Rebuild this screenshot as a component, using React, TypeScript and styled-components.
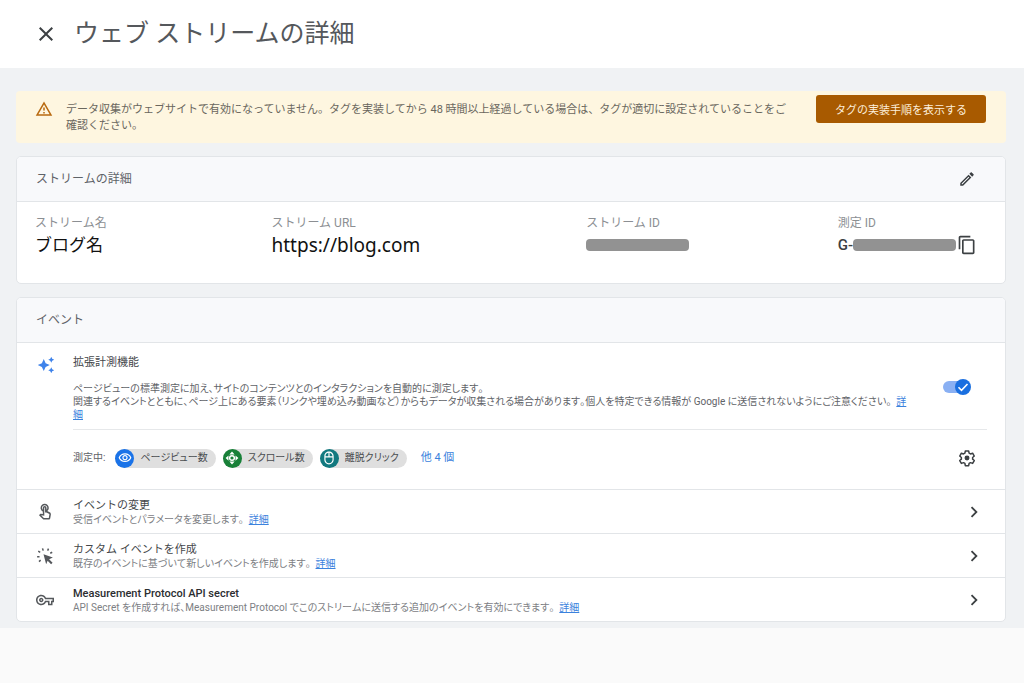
import React from "react";
import styled, { createGlobalStyle } from "styled-components";
import {
  MdAutoAwesome,
  MdChevronRight,
  MdClose,
  MdContentCopy,
  MdOutlineEdit,
  MdOutlineMouse,
  MdOutlineTouchApp,
  MdOutlineVisibility,
  MdOutlineVpnKey,
  MdOutlineWarningAmber,
} from "react-icons/md";

const GlobalStyle = createGlobalStyle`
  *, *::before, *::after { box-sizing: border-box; }
  body {
    margin: 0;
    background: #fafafa;
    color: #5f6368;
    font-family: Roboto, "Noto Sans CJK JP", sans-serif;
    font-size: 11px;
    line-height: 16px;
  }
  h1, h2, h3, p, dl, dd, ul { margin: 0; padding: 0; font-weight: 400; }
  ul { list-style: none; }
  button { font-family: inherit; border: 0; padding: 0; background: none; cursor: pointer; }
`;

const TopBar = styled.header`
  display: flex;
  align-items: center;
  gap: 16px;
  height: 68px;
  padding: 0 34px;
  background: #fff;
`;

const PageTitle = styled.h1`
  font-size: 25px;
  line-height: 36px;
  color: #55585c;
`;

const IconButton = styled.button<{ $size: number }>`
  display: flex;
  flex: none;
  color: #3c4043;
  svg {
    width: ${(p) => p.$size}px;
    height: ${(p) => p.$size}px;
  }
`;

const Main = styled.main`
  display: flex;
  flex-direction: column;
  gap: 13px;
  padding: 23px 18px 6px 16px;
  background: #f0f2f4;
`;

const Alert = styled.section`
  display: flex;
  align-items: flex-start;
  min-height: 52px;
  padding: 4px 20px 9px 19px;
  border-radius: 4px;
  background: #fef6e0;
`;

const AlertIcon = styled(MdOutlineWarningAmber)`
  flex: none;
  width: 18px;
  height: 18px;
  margin: 5px 13px 0 0;
  color: #b8690f;
`;

const AlertText = styled.p`
  flex: 1;
  padding-top: 7px;
  color: #6a675e;
`;

const AlertButton = styled.button`
  flex: none;
  height: 28px;
  margin-left: 20px;
  padding: 0 19px;
  border-radius: 3px;
  background: #a85a00;
  color: #fdeeda;
  font-size: 11px;
`;

const Card = styled.section`
  border: 1px solid #e2e5e8;
  border-radius: 5px;
  background: #fff;
  overflow: hidden;
`;

const CardHeader = styled.header`
  display: flex;
  align-items: center;
  justify-content: space-between;
  height: 45px;
  padding: 0 29px 0 19px;
  border-bottom: 1px solid #e2e5e8;
  background: #f8f9fb;
`;

const CardTitle = styled.h2`
  font-size: 12px;
  line-height: 20px;
`;

const DetailList = styled.dl`
  display: grid;
  grid-template-columns: 236fr 314fr 251fr 149fr;
  min-height: 81px;
  padding: 12px 18px 24px;
`;

const DetailLabel = styled.dt`
  font-size: 12px;
  line-height: 18px;
  color: #8c8f93;
`;

const DetailValue = styled.dd`
  display: flex;
  align-items: center;
  height: 26px;
  color: #111;
  font-size: 17px;
`;

const StreamUrl = styled.span`
  font-family: "Noto Sans", sans-serif;
  font-size: 19px;
`;

const MeasurementId = styled.span`
  color: #3c4043;
  font-size: 15px;
  font-weight: 500;
`;

const Redacted = styled.span`
  flex: none;
  width: 103px;
  height: 12px;
  margin-right: 1px;
  border-radius: 4px;
  background: #929292;
`;

const Enhanced = styled.div`
  padding: 13px 18px 0 56px;
`;

const EnhancedTop = styled.div`
  display: flex;
  align-items: center;
  padding-bottom: 8px;
  border-bottom: 1px solid #e6e8ea;
`;

const Sparkles = styled(MdAutoAwesome)`
  flex: none;
  align-self: flex-start;
  width: 18px;
  height: 18px;
  margin: 0 18px 0 -36px;
  color: #3f83ea;
`;

const EnhancedText = styled.div`
  flex: 1;
`;

const ItemTitle = styled.h3<{ $strong?: boolean }>`
  font-size: 11px;
  font-weight: ${(p) => (p.$strong ? 500 : 400)};
  line-height: 14px;
  color: ${(p) => (p.$strong ? "#2b2d30" : "#44474a")};
`;

const Description = styled.p`
  padding-top: 12px;
  font-size: 10px;
  font-feature-settings: "palt";
  font-kerning: none;
  line-height: 13px;
`;

const Link = styled.a`
  margin-left: 5px;
  color: #3b82dd;
  text-decoration: underline;
`;

const Switch = styled.label`
  position: relative;
  display: flex;
  flex: none;
  align-items: center;
  width: 28px;
  height: 16px;
  margin: 0 16px 4px 32px;
  input {
    appearance: none;
    width: 25px;
    height: 12px;
    margin: 0;
    border-radius: 6px;
    background: #8ab0f3;
  }
  svg {
    position: absolute;
    right: 0;
    top: 0;
    width: 16px;
    height: 16px;
  }
`;

const ChipRow = styled.div`
  display: flex;
  align-items: center;
  gap: 10px;
  height: 59px;
  padding: 0 11px 3px 0;
  font-size: 10px;
`;

const ChipList = styled.ul`
  display: flex;
  gap: 7px;
`;

const Chip = styled.li`
  display: flex;
  align-items: center;
  gap: 6px;
  height: 19px;
  padding-right: 8px;
  border-radius: 10px;
  background: #dfdfdf;
  color: #4a4d50;
  font-feature-settings: "palt";
  font-kerning: none;
`;

const ChipIcon = styled.span<{ $color: string }>`
  display: grid;
  place-items: center;
  width: 19px;
  height: 19px;
  border-radius: 50%;
  background: ${(p) => p.$color};
  color: #fff;
  svg {
    width: 14px;
    height: 14px;
  }
`;

const MoreLink = styled.a`
  flex: 1;
  padding-left: 4px;
  color: #3b82dd;
  font-size: 11px;
  text-decoration: none;
`;

const ActionRow = styled.article`
  display: flex;
  align-items: center;
  height: 44px;
  padding: 0 20px 0 19px;
  border-top: 1px solid #e2e5e8;
  > svg {
    flex: none;
    width: 18px;
    height: 18px;
    margin-right: 19px;
    color: #55585c;
  }
`;

const ActionText = styled.div`
  flex: 1;
  padding-top: 1px;
  p {
    padding: 0;
    color: #7d8084;
  }
`;

const GearIcon = () => (
  <svg viewBox="0 0 24 24" fill="none" stroke="currentColor" strokeWidth="2" strokeLinejoin="round" aria-hidden="true">
    <path d="M9.8 2.600h4.400l.6 2.900 1.900 1.100 2.800-1 2.200 3.800-2.200 1.900v2.200l2.200 1.900-2.200 3.800-2.800-1-1.900 1.100-.6 2.900H9.800l-.6-2.900-1.900-1.100-2.800 1-2.200-3.800 2.200-1.900v-2.200L2.300 9.400l2.200-3.800 2.800 1 1.900-1.100z" />
    <circle cx="12" cy="12" r="3.300" fill="currentColor" stroke="none" />
  </svg>
);

const ScrollIcon = () => (
  <svg viewBox="0 0 24 24" fill="currentColor" aria-hidden="true">
    <path d="M12 1l4.500 5h-9zM12 23l-4.500-5h9zM1 12l5-4.500v9zM23 12l-5 4.500v-9z" />
    <circle cx="12" cy="12" r="4" fill="none" stroke="currentColor" strokeWidth="2.500" />
  </svg>
);

const ClickIcon = () => (
  <svg viewBox="0 0 24 24" aria-hidden="true">
    <path d="M10 9.500l12.500 4.600-5 2.200 4.600 4.600-2 2-4.600-4.600-2 4.700z" fill="currentColor" />
    <path d="M1.500 13h3.200M3 5.500l2.600 1.700M8.700 1.800l.9 3M15.500 4.800l1.200-2.700M4 19.500l2.200-2M19 8.300l2.600-1.300" fill="none" stroke="currentColor" strokeWidth="2" />
  </svg>
);

const SwitchKnob = () => (
  <svg viewBox="0 0 16 16" aria-hidden="true">
    <circle cx="8" cy="8" r="8" fill="#1a6fe0" />
    <path d="M3.500 8.300l3 3L12.500 5" fill="none" stroke="#fff" strokeWidth="1.600" />
  </svg>
);

const chips = [
  { label: "ページビュー数", color: "#1a73e8", icon: <MdOutlineVisibility /> },
  { label: "スクロール数", color: "#188038", icon: <ScrollIcon /> },
  { label: "離脱クリック", color: "#12797f", icon: <MdOutlineMouse /> },
];

const actions = [
  {
    title: "イベントの変更",
    text: "受信イベントとパラメータを変更します。",
    icon: <MdOutlineTouchApp />,
  },
  {
    title: "カスタム イベントを作成",
    text: "既存のイベントに基づいて新しいイベントを作成します。",
    icon: <ClickIcon />,
  },
  {
    title: "Measurement Protocol API secret",
    text: "API Secret を作成すれば、Measurement Protocol でこのストリームに送信する追加のイベントを有効にできます。",
    icon: <MdOutlineVpnKey />,
    strong: true,
  },
];

export default function App() {
  return (
    <>
      <GlobalStyle />
      <TopBar>
        <IconButton $size={24} aria-label="閉じる">
          <MdClose />
        </IconButton>
        <PageTitle>ウェブ ストリームの詳細</PageTitle>
      </TopBar>
      <Main>
        <Alert>
          <AlertIcon />
          <AlertText>
            データ収集がウェブサイトで有効になっていません。タグを実装してから 48
            時間以上経過している場合は、タグが適切に設定されていることをご確認ください。
          </AlertText>
          <AlertButton>タグの実装手順を表示する</AlertButton>
        </Alert>

        <Card>
          <CardHeader>
            <CardTitle>ストリームの詳細</CardTitle>
            <IconButton $size={18} aria-label="編集">
              <MdOutlineEdit />
            </IconButton>
          </CardHeader>
          <DetailList>
            <div>
              <DetailLabel>ストリーム名</DetailLabel>
              <DetailValue>ブログ名</DetailValue>
            </div>
            <div>
              <DetailLabel>ストリーム URL</DetailLabel>
              <DetailValue>
                <StreamUrl>https://blog.com</StreamUrl>
              </DetailValue>
            </div>
            <div>
              <DetailLabel>ストリーム ID</DetailLabel>
              <DetailValue>
                <Redacted />
              </DetailValue>
            </div>
            <div>
              <DetailLabel>測定 ID</DetailLabel>
              <DetailValue>
                <MeasurementId>G-</MeasurementId>
                <Redacted />
                <IconButton $size={20} aria-label="コピー">
                  <MdContentCopy />
                </IconButton>
              </DetailValue>
            </div>
          </DetailList>
        </Card>

        <Card>
          <CardHeader>
            <CardTitle>イベント</CardTitle>
          </CardHeader>
          <Enhanced>
            <EnhancedTop>
              <Sparkles />
              <EnhancedText>
                <ItemTitle>拡張計測機能</ItemTitle>
                <Description>
                  ページビューの標準測定に加え、サイトのコンテンツとのインタラクションを自動的に測定します。
                  <br />
                  関連するイベントとともに、ページ上にある要素（リンクや埋め込み動画など）からもデータが収集される場合があります。個人を特定できる情報が
                  Google に送信されないようにご注意ください。<Link href="#enhanced">詳細</Link>
                </Description>
              </EnhancedText>
              <Switch>
                <input type="checkbox" role="switch" aria-label="拡張計測機能" defaultChecked />
                <SwitchKnob />
              </Switch>
            </EnhancedTop>
            <ChipRow>
              <span>測定中:</span>
              <ChipList>
                {chips.map((c) => (
                  <Chip key={c.label}>
                    <ChipIcon $color={c.color}>{c.icon}</ChipIcon>
                    {c.label}
                  </Chip>
                ))}
              </ChipList>
              <MoreLink href="#more">他 4 個</MoreLink>
              <IconButton $size={18} aria-label="設定">
                <GearIcon />
              </IconButton>
            </ChipRow>
          </Enhanced>
          {actions.map((a) => (
            <ActionRow key={a.title}>
              {a.icon}
              <ActionText>
                <ItemTitle $strong={a.strong}>{a.title}</ItemTitle>
                <Description>
                  {a.text}
                  <Link href="#details">詳細</Link>
                </Description>
              </ActionText>
              <IconButton $size={22} aria-label={a.title}>
                <MdChevronRight />
              </IconButton>
            </ActionRow>
          ))}
        </Card>
      </Main>
    </>
  );
}
